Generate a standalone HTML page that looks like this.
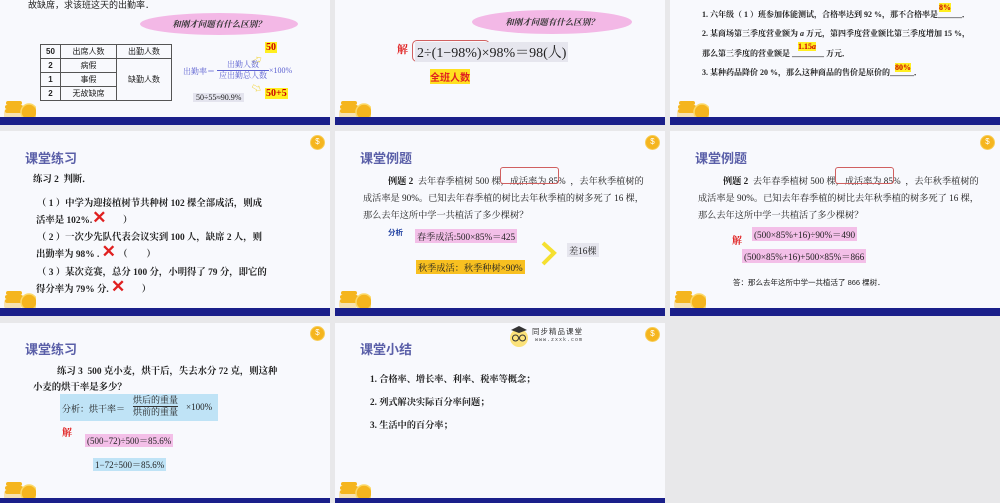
<!DOCTYPE html>
<html><head><meta charset="utf-8">
<style>
*{margin:0;padding:0;box-sizing:border-box}
body{width:1000px;height:503px;background:#e8e8ea;position:relative;overflow:hidden;font-family:"Liberation Serif","Noto Serif CJK SC","Noto Sans CJK SC",serif;color:#222}
.s{position:absolute;background:#f8f9fd;overflow:hidden}
.bar{position:absolute;left:0;right:0;height:8px;background:#1a1f8a}
.a{position:absolute;white-space:nowrap}
.t{font-family:"Liberation Sans","Noto Sans CJK SC",sans-serif;font-size:13px;font-weight:bold;color:#5a5fa8}
.b{font-weight:bold}
.x{color:#e02020;font-size:17px;line-height:8px;font-family:"Liberation Sans",sans-serif;font-weight:bold}
.coin{position:absolute;width:15px;height:15px;border-radius:50%;background:#f5b51e;border:1.5px solid #f7cd58;color:#fff;font-size:8px;text-align:center;line-height:12px;font-family:"Liberation Sans",sans-serif}
.stack{position:absolute;left:2px;width:34px;height:22px}
.cloud{position:absolute;background:#f3b8e6;border-radius:50%;font-size:8.5px;font-weight:bold;font-style:italic;text-align:center;color:#333}
.p{font-size:9px;font-family:"Liberation Sans","Noto Sans CJK SC",sans-serif}
td{border:1px solid #555;text-align:center;font-size:8px;height:14px}
</style></head><body>

<!-- slide 1 -->
<div class="s" style="left:0;top:0;width:330px;height:125px">
 <div class="a p" style="left:28px;top:-2px;font-size:9px">故缺席，求该班这天的出勤率．</div>
 <div class="cloud" style="left:140px;top:13px;width:158px;height:22px;line-height:22px">和刚才问题有什么区别？</div>
 <table style="position:absolute;left:40px;top:44px;border-collapse:collapse;width:132px;font-family:'Liberation Sans','Noto Sans CJK SC',sans-serif">
  <tr><td style="width:20px" class="b">50</td><td style="width:56px">出席人数</td><td>出勤人数</td></tr>
  <tr><td class="b">2</td><td>病假</td><td rowspan="3">缺勤人数</td></tr>
  <tr><td class="b">1</td><td>事假</td></tr>
  <tr><td class="b">2</td><td>无故缺席</td></tr>
 </table>
 <div class="a b" style="left:265px;top:42px;background:#ffef20;color:#c00;font-size:10px;padding:0 1px">50</div>
 <div class="a" style="left:252px;top:52px;color:#f0d020;font-size:10px;transform:rotate(-30deg)">⇨</div>
 <div class="a" style="left:183px;top:66px;color:#5a5fd0;font-size:8px">出勤率＝</div>
 <div class="a" style="left:217px;top:60px;color:#5a5fd0;font-size:8px;text-align:center;width:52px;line-height:10px">出勤人数<div style="border-top:1px solid #5a5fd0">应出勤总人数</div></div>
 <div class="a" style="left:269px;top:66px;color:#5a5fd0;font-size:8px">×100%</div>
 <div class="a" style="left:252px;top:80px;color:#f0d020;font-size:10px;transform:rotate(30deg)">⇨</div>
 <div class="a b" style="left:265px;top:88px;background:#ffef20;color:#c00;font-size:10px;padding:0 1px">50+5</div>
 <div class="a" style="left:193px;top:93px;background:#e4e4ee;font-size:8px;padding:0 3px">50÷55≈90.9%</div>
 <div class="stack" style="top:99px"><svg width="34" height="22"><rect x="2" y="10" width="18" height="10" rx="3" fill="#f7e2b0"/><rect x="4" y="2" width="16" height="4" rx="2" fill="#f5b51e"/><rect x="3" y="6" width="18" height="4" rx="2" fill="#f5b51e"/><rect x="3" y="10" width="18" height="4" rx="2" fill="#f5b51e"/><circle cx="27" cy="13" r="8" fill="#f5b51e" stroke="#fbd96a" stroke-width="1.5"/></svg></div>
 <div class="bar" style="top:117px"></div>
</div>

<!-- slide 2 -->
<div class="s" style="left:335px;top:0;width:330px;height:125px">
 <div class="cloud" style="left:137px;top:10px;width:160px;height:24px;line-height:24px">和刚才问题有什么区别？</div>
 <div class="a b" style="left:62px;top:41px;color:#e02020;font-size:11px">解</div>
 <div class="a" style="left:77px;top:40px;width:78px;height:22px;border:1.5px solid #d06060;border-radius:5px"></div>
 <div class="a" style="left:80px;top:42px;font-size:14px;background:#e6e6ee;padding:0 2px">2÷(1−98%)×98%＝98(人)</div>
 <div class="a b" style="left:95px;top:69px;background:#ffe020;color:#e02020;font-size:10px;font-family:'Liberation Sans','Noto Sans CJK SC',sans-serif">全班人数</div>
 <div class="stack" style="top:99px"><svg width="34" height="22"><rect x="2" y="10" width="18" height="10" rx="3" fill="#f7e2b0"/><rect x="4" y="2" width="16" height="4" rx="2" fill="#f5b51e"/><rect x="3" y="6" width="18" height="4" rx="2" fill="#f5b51e"/><rect x="3" y="10" width="18" height="4" rx="2" fill="#f5b51e"/><circle cx="27" cy="13" r="8" fill="#f5b51e" stroke="#fbd96a" stroke-width="1.5"/></svg></div>
 <div class="bar" style="top:117px"></div>
</div>

<!-- slide 3 -->
<div class="s" style="left:670px;top:0;width:330px;height:125px;font-size:8px">
 <div class="a b" style="left:32px;top:9px">1. 六年级（ 1 ）班参加体能测试，合格率达到 92 %，那不合格率是______．</div>
 <div class="a b" style="left:269px;top:3px;background:#ffef20;color:#c00;font-size:8px">8%</div>
 <div class="a b" style="left:32px;top:28px">2. 某商场第三季度营业额为 <i>a</i> 万元，第四季度营业额比第三季度增加 15 %，</div>
 <div class="a b" style="left:32px;top:48px">那么第三季度的营业额是 ________ 万元．</div>
 <div class="a b" style="left:128px;top:42px;background:#ffef20;color:#c00;font-size:8px">1.15<i>a</i></div>
 <div class="a b" style="left:32px;top:67px">3. 某种药品降价 20 %，那么这种商品的售价是原价的______．</div>
 <div class="a b" style="left:225px;top:63px;background:#ffef20;color:#c00;font-size:8px">80%</div>
 <div class="stack" style="top:99px;left:5px"><svg width="34" height="22"><rect x="2" y="10" width="18" height="10" rx="3" fill="#f7e2b0"/><rect x="4" y="2" width="16" height="4" rx="2" fill="#f5b51e"/><rect x="3" y="6" width="18" height="4" rx="2" fill="#f5b51e"/><rect x="3" y="10" width="18" height="4" rx="2" fill="#f5b51e"/><circle cx="27" cy="13" r="8" fill="#f5b51e" stroke="#fbd96a" stroke-width="1.5"/></svg></div>
 <div class="bar" style="top:117px"></div>
</div>

<!-- slide 4 -->
<div class="s" style="left:0;top:131px;width:330px;height:185px;font-size:9.4px">
 <div class="coin" style="left:310px;top:4px">$</div>
 <div class="a t" style="left:25px;top:17px">课堂练习</div>
 <div class="a b" style="left:33px;top:40px">练习 2 &nbsp;判断．</div>
 <div class="a b" style="left:37px;top:64px">（ 1 ）中学为迎接植树节共种树 102 棵全部成活，则成</div>
 <div class="a b" style="left:36px;top:81px">活率是 102%.<span class="x">✕</span> &nbsp;&nbsp;&nbsp;&nbsp;&nbsp;&nbsp;）</div>
 <div class="a b" style="left:37px;top:98px">（ 2 ）一次少先队代表会议实到 100 人，缺席 2 人，则</div>
 <div class="a b" style="left:36px;top:115px">出勤率为 98% . <span class="x">✕</span> （ &nbsp;&nbsp;&nbsp;&nbsp;&nbsp;&nbsp;&nbsp;）</div>
 <div class="a b" style="left:37px;top:133px">（ 3 ）某次竞赛，总分 100 分，小明得了 79 分，即它的</div>
 <div class="a b" style="left:36px;top:150px">得分率为 79% 分. <span class="x">✕</span> &nbsp;&nbsp;&nbsp;&nbsp;&nbsp;&nbsp;）</div>
 <div class="stack" style="top:158px"><svg width="34" height="22"><rect x="2" y="10" width="18" height="10" rx="3" fill="#f7e2b0"/><rect x="4" y="2" width="16" height="4" rx="2" fill="#f5b51e"/><rect x="3" y="6" width="18" height="4" rx="2" fill="#f5b51e"/><rect x="3" y="10" width="18" height="4" rx="2" fill="#f5b51e"/><circle cx="27" cy="13" r="8" fill="#f5b51e" stroke="#fbd96a" stroke-width="1.5"/></svg></div>
 <div class="bar" style="top:177px"></div>
</div>

<!-- slide 5 -->
<div class="s" style="left:335px;top:131px;width:330px;height:185px;font-size:9.2px">
 <div class="coin" style="left:310px;top:4px">$</div>
 <div class="a t" style="left:25px;top:17px">课堂例题</div>
 <div class="a" style="left:53px;top:42px"><b>例题 2</b> &nbsp;去年春季植树 500 棵，成活率为 85% &nbsp;，去年秋季植树的</div>
 <div class="a" style="left:165px;top:36px;width:59px;height:17px;border:1px solid #d06060;border-radius:3px"></div>
 <div class="a" style="left:28px;top:59px">成活率是 90%。已知去年春季植的树比去年秋季植的树多死了 16 棵，</div>
 <div class="a" style="left:28px;top:76px">那么去年这所中学一共植活了多少棵树？</div>
 <div class="a b" style="left:53px;top:96px;color:#2040a0;font-size:7.5px;font-family:'Liberation Sans','Noto Sans CJK SC',sans-serif">分析</div>
 <div class="a" style="left:80px;top:98px;background:#f3bfe8;padding:0 2px">春季成活:500×85%＝425</div>
 <svg class="a" style="left:205px;top:110px" width="18" height="25"><path d="M3 2 L14 12 L3 23" fill="none" stroke="#f5e030" stroke-width="4"/></svg>
 <div class="a" style="left:232px;top:112px;background:#e6e6ee;padding:0 2px">差16棵</div>
 <div class="a" style="left:81px;top:129px;background:#f8c020;padding:0 2px">秋季成活：秋季种树×90%</div>
 <div class="stack" style="top:158px"><svg width="34" height="22"><rect x="2" y="10" width="18" height="10" rx="3" fill="#f7e2b0"/><rect x="4" y="2" width="16" height="4" rx="2" fill="#f5b51e"/><rect x="3" y="6" width="18" height="4" rx="2" fill="#f5b51e"/><rect x="3" y="10" width="18" height="4" rx="2" fill="#f5b51e"/><circle cx="27" cy="13" r="8" fill="#f5b51e" stroke="#fbd96a" stroke-width="1.5"/></svg></div>
 <div class="bar" style="top:177px"></div>
</div>

<!-- slide 6 -->
<div class="s" style="left:670px;top:131px;width:330px;height:185px;font-size:9.2px">
 <div class="coin" style="left:310px;top:4px">$</div>
 <div class="a t" style="left:25px;top:17px">课堂例题</div>
 <div class="a" style="left:53px;top:42px"><b>例题 2</b> &nbsp;去年春季植树 500 棵，成活率为 85% &nbsp;，去年秋季植树的</div>
 <div class="a" style="left:165px;top:36px;width:59px;height:17px;border:1px solid #d06060;border-radius:3px"></div>
 <div class="a" style="left:28px;top:59px">成活率是 90%。已知去年春季植的树比去年秋季植的树多死了 16 棵，</div>
 <div class="a" style="left:28px;top:76px">那么去年这所中学一共植活了多少棵树？</div>
 <div class="a b" style="left:62px;top:101px;color:#e02020;font-size:10px">解</div>
 <div class="a" style="left:82px;top:96px;background:#f3bfe8;padding:0 2px">(500×85%+16)÷90%＝490</div>
 <div class="a" style="left:72px;top:118px;background:#f3bfe8;padding:0 2px">(500×85%+16)+500×85%＝866</div>
 <div class="a p" style="left:63px;top:146px;font-size:7.5px">答：那么去年这所中学一共植活了 866 棵树．</div>
 <div class="stack" style="top:158px"><svg width="34" height="22"><rect x="2" y="10" width="18" height="10" rx="3" fill="#f7e2b0"/><rect x="4" y="2" width="16" height="4" rx="2" fill="#f5b51e"/><rect x="3" y="6" width="18" height="4" rx="2" fill="#f5b51e"/><rect x="3" y="10" width="18" height="4" rx="2" fill="#f5b51e"/><circle cx="27" cy="13" r="8" fill="#f5b51e" stroke="#fbd96a" stroke-width="1.5"/></svg></div>
 <div class="bar" style="top:177px"></div>
</div>

<!-- slide 7 -->
<div class="s" style="left:0;top:323px;width:330px;height:180px;font-size:9.4px">
 <div class="coin" style="left:310px;top:3px">$</div>
 <div class="a t" style="left:25px;top:16px">课堂练习</div>
 <div class="a b" style="left:57px;top:40px">练习 3 &nbsp;500 克小麦，烘干后，失去水分 72 克，则这种</div>
 <div class="a b" style="left:33px;top:56px">小麦的烘干率是多少？</div>
 <div class="a" style="left:60px;top:71px;width:158px;height:27px;background:#bfe3f6"></div>
 <div class="a" style="left:62px;top:79px;font-size:9px">分析：烘干率＝</div>
 <div class="a" style="left:133px;top:72px;font-size:9px;line-height:11px;text-align:center">烘后的重量<div style="border-top:1px solid #333">烘前的重量</div></div>
 <div class="a" style="left:186px;top:79px;font-size:9px">×100%</div>
 <div class="a b" style="left:62px;top:101px;color:#e02020;font-size:10px">解</div>
 <div class="a" style="left:85px;top:111px;background:#f3bfe8;padding:0 2px;font-size:9px">(500−72)÷500＝85.6%</div>
 <div class="a" style="left:93px;top:135px;background:#bfe3f6;padding:0 2px;font-size:9px">1−72÷500＝85.6%</div>
 <div class="stack" style="top:157px"><svg width="34" height="22"><rect x="2" y="10" width="18" height="10" rx="3" fill="#f7e2b0"/><rect x="4" y="2" width="16" height="4" rx="2" fill="#f5b51e"/><rect x="3" y="6" width="18" height="4" rx="2" fill="#f5b51e"/><rect x="3" y="10" width="18" height="4" rx="2" fill="#f5b51e"/><circle cx="27" cy="13" r="8" fill="#f5b51e" stroke="#fbd96a" stroke-width="1.5"/></svg></div>
 <div class="bar" style="top:175px"></div>
</div>

<!-- slide 8 -->
<div class="s" style="left:335px;top:323px;width:330px;height:180px;font-size:9.2px">
 <svg class="a" style="left:174px;top:2px" width="20" height="22"><circle cx="10" cy="13" r="9" fill="#fbe27a"/><path d="M2 5 L10 1 L18 5 L10 8 Z" fill="#333"/><circle cx="6.5" cy="13" r="3" fill="none" stroke="#333"/><circle cx="13.5" cy="13" r="3" fill="none" stroke="#333"/></svg>
 <div class="a" style="left:197px;top:3px;font-size:7.5px;letter-spacing:1px;color:#333;font-family:'Noto Sans CJK SC',sans-serif">同步精品课堂</div>
 <div class="a" style="left:200px;top:14px;font-size:5px;letter-spacing:1px;color:#444;font-family:'Liberation Mono',monospace">www.zxxk.com</div>
 <div class="coin" style="left:310px;top:4px">$</div>
 <div class="a t" style="left:25px;top:16px">课堂小结</div>
 <div class="a b" style="left:35px;top:48px">1. 合格率、增长率、利率、税率等概念；</div>
 <div class="a b" style="left:35px;top:71px">2. 列式解决实际百分率问题；</div>
 <div class="a b" style="left:35px;top:94px">3. 生活中的百分率；</div>
 <div class="stack" style="top:157px"><svg width="34" height="22"><rect x="2" y="10" width="18" height="10" rx="3" fill="#f7e2b0"/><rect x="4" y="2" width="16" height="4" rx="2" fill="#f5b51e"/><rect x="3" y="6" width="18" height="4" rx="2" fill="#f5b51e"/><rect x="3" y="10" width="18" height="4" rx="2" fill="#f5b51e"/><circle cx="27" cy="13" r="8" fill="#f5b51e" stroke="#fbd96a" stroke-width="1.5"/></svg></div>
 <div class="bar" style="top:175px"></div>
</div>

</body></html>
